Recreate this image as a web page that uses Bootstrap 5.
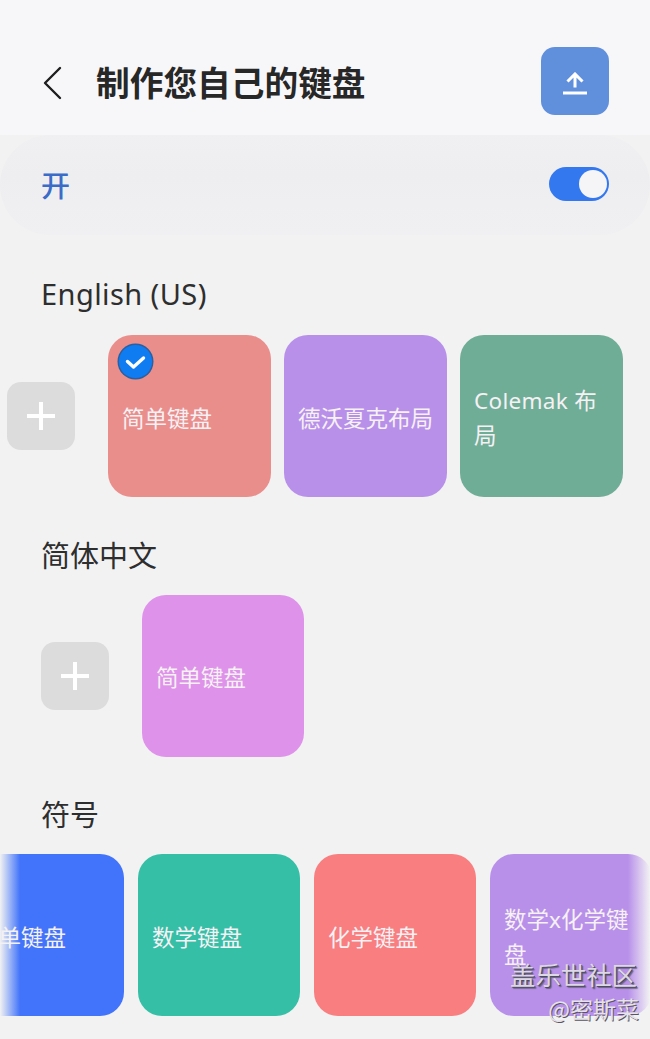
<!DOCTYPE html>
<html lang="zh">
<head>
<meta charset="utf-8">
<title>制作您自己的键盘</title>
<link rel="stylesheet" href="https://cdn.jsdelivr.net/npm/bootstrap@5.3.0/dist/css/bootstrap.min.css">
<style>
html,body{height:1039px;overflow:hidden}
body{background:#f2f2f3;font-family:"Noto Sans","Noto Sans CJK SC",sans-serif;color:#252525;position:relative}
.top-bar{height:135px;background:#f7f7fa;padding:30px 41px 0 41px}
.top-title{font-size:33.7px;font-weight:700;margin:-1px 0 0 33px;line-height:1;color:#272727;font-family:"Noto Sans CJK SC",sans-serif}
.upload-btn{width:68px;height:68px;background:#6090dc;border-radius:14px;border:0;padding:0;margin-top:-3px}
.upload-icon{margin-top:5px}
.switch-band{height:100px;border-radius:50px;padding:0 41px 0 41px;background:linear-gradient(#f0f0f2,#eeeef0 40%,#f0f0f2)}
.switch-label{color:#3a6cc8;font-size:29px;line-height:1;margin-top:-1px;font-weight:500;font-family:"Noto Sans CJK SC",sans-serif}
.switch-track{width:60px;height:34px;border-radius:17px;background:#3478f0;padding:3px 2px;margin-bottom:2px}
.switch-knob{width:28px;height:28px;border-radius:50%;background:#f5f5f8}
.group-name{font-size:29px;line-height:40px;height:40px;padding-left:41px;color:#2e2e2e}
.first-name{margin-top:39px;letter-spacing:.42px}
.next-name{margin-top:38.5px}
.kb-row{height:162px;margin-top:21px;overflow:hidden;position:relative}
.next-name + .kb-row{margin-top:19px}
.kb-row.row-a{padding-left:7px}
.kb-row.row-b{padding-left:41px}
.kb-row.row-c{margin-left:-38px;width:700px}
.add-tile{width:68px;height:68px;background:#dcdcdc;border-radius:14px;flex:none;margin-right:33px}
.kb-tile{width:162px;height:162px;border-radius:24px;flex:none;color:#f6f1f4;font-size:22.5px;line-height:35px;padding:4px 10px 0 14px;position:relative;margin-right:14px}
.row-a .kb-tile{width:162.5px;margin-right:13.5px}
.wide-latin{letter-spacing:.3px}
.check-mark{position:absolute;left:9px;top:8px;width:37px;height:37px}
.tone-a{background:#ea8e8c}
.tone-b{background:#b890ea}
.tone-c{background:#6fad97}
.tone-d{background:#de92ea}
.tone-e{background:#4274fb}
.tone-f{background:#35bfa6}
.tone-g{background:#f97e80}
.fade-left,.fade-right{position:absolute;top:854px;height:162px;width:20px}
.fade-left{left:0;background:linear-gradient(90deg,#f2f2f3,rgba(242,242,243,0))}
.fade-right{right:0;width:22px;background:linear-gradient(270deg,#f2f2f3,rgba(242,242,243,0))}
.mark-a,.mark-b{position:absolute;line-height:1;color:#dcd8e4;font-family:"Noto Sans CJK SC",sans-serif}
.mark-a{top:962px;font-size:25.4px;right:13px;text-shadow:1px 1px 0 #4f4a64,2px 2px 1px #6a6480}
.mark-b{top:997px;font-size:23px;right:11px;color:#e6e2ea;text-shadow:1px 1px 0 #5a5560}
</style>
</head>
<body>
<header class="top-bar d-flex align-items-center">
  <svg width="22" height="34" viewBox="0 0 22 34" fill="none" stroke="#1e1e1e" stroke-width="2.4" stroke-linecap="round" stroke-linejoin="round"><path d="M19 2 4 17l15 15"/></svg>
  <h1 class="top-title flex-grow-1">制作您自己的键盘</h1>
  <button class="upload-btn d-flex align-items-center justify-content-center" type="button" aria-label="上传">
    <svg class="upload-icon" width="24" height="23" viewBox="0 0 24 23" fill="none" stroke="#fff" stroke-width="3"><path d="M12 15.5V2.5M4.5 9.5l7.5-7.5 7.5 7.5"/><path d="M0 21h24"/></svg>
  </button>
</header>
<section class="switch-band d-flex align-items-center justify-content-between">
  <span class="switch-label">开</span>
  <div class="switch-track d-flex justify-content-end"><div class="switch-knob"></div></div>
</section>

<div class="group-name first-name">English (US)</div>
<div class="kb-row row-a d-flex align-items-center">
  <div class="add-tile d-flex align-items-center justify-content-center">
    <svg width="30" height="30" viewBox="0 0 30 30" stroke="#fff" stroke-width="4"><path d="M15 1v28M1 15h28"/></svg>
  </div>
  <div class="kb-tile tone-a d-flex align-items-center">
    <svg class="check-mark" viewBox="0 0 37 37"><circle cx="18.5" cy="18.5" r="18" fill="#2c5f9c"/><circle cx="18.5" cy="18.5" r="16.6" fill="#0f7cf2"/><path d="M10.5 18.5l6 5.5 10-9" fill="none" stroke="#fff" stroke-width="3.4" stroke-linecap="round" stroke-linejoin="round"/></svg>
    <span>简单键盘</span>
  </div>
  <div class="kb-tile tone-b d-flex align-items-center"><span>德沃夏克布局</span></div>
  <div class="kb-tile tone-c d-flex align-items-center"><span class="wide-latin">Colemak 布局</span></div>
</div>

<div class="group-name next-name">简体中文</div>
<div class="kb-row row-b d-flex align-items-center">
  <div class="add-tile d-flex align-items-center justify-content-center">
    <svg width="30" height="30" viewBox="0 0 30 30" stroke="#fff" stroke-width="4"><path d="M15 1v28M1 15h28"/></svg>
  </div>
  <div class="kb-tile tone-d d-flex align-items-center"><span>简单键盘</span></div>
</div>

<div class="group-name next-name">符号</div>
<div class="kb-row row-c d-flex align-items-center">
  <div class="kb-tile tone-e d-flex align-items-center"><span>简单键盘</span></div>
  <div class="kb-tile tone-f d-flex align-items-center"><span>数学键盘</span></div>
  <div class="kb-tile tone-g d-flex align-items-center"><span>化学键盘</span></div>
  <div class="kb-tile tone-b d-flex align-items-center"><span>数学x化学键盘</span></div>
</div>
<div class="fade-left"></div>
<div class="fade-right"></div>
<div class="mark-a">盖乐世社区</div>
<div class="mark-b">@密斯菜</div>
<script src="https://cdn.jsdelivr.net/npm/bootstrap@5.3.0/dist/js/bootstrap.bundle.min.js"></script>
</body>
</html>
